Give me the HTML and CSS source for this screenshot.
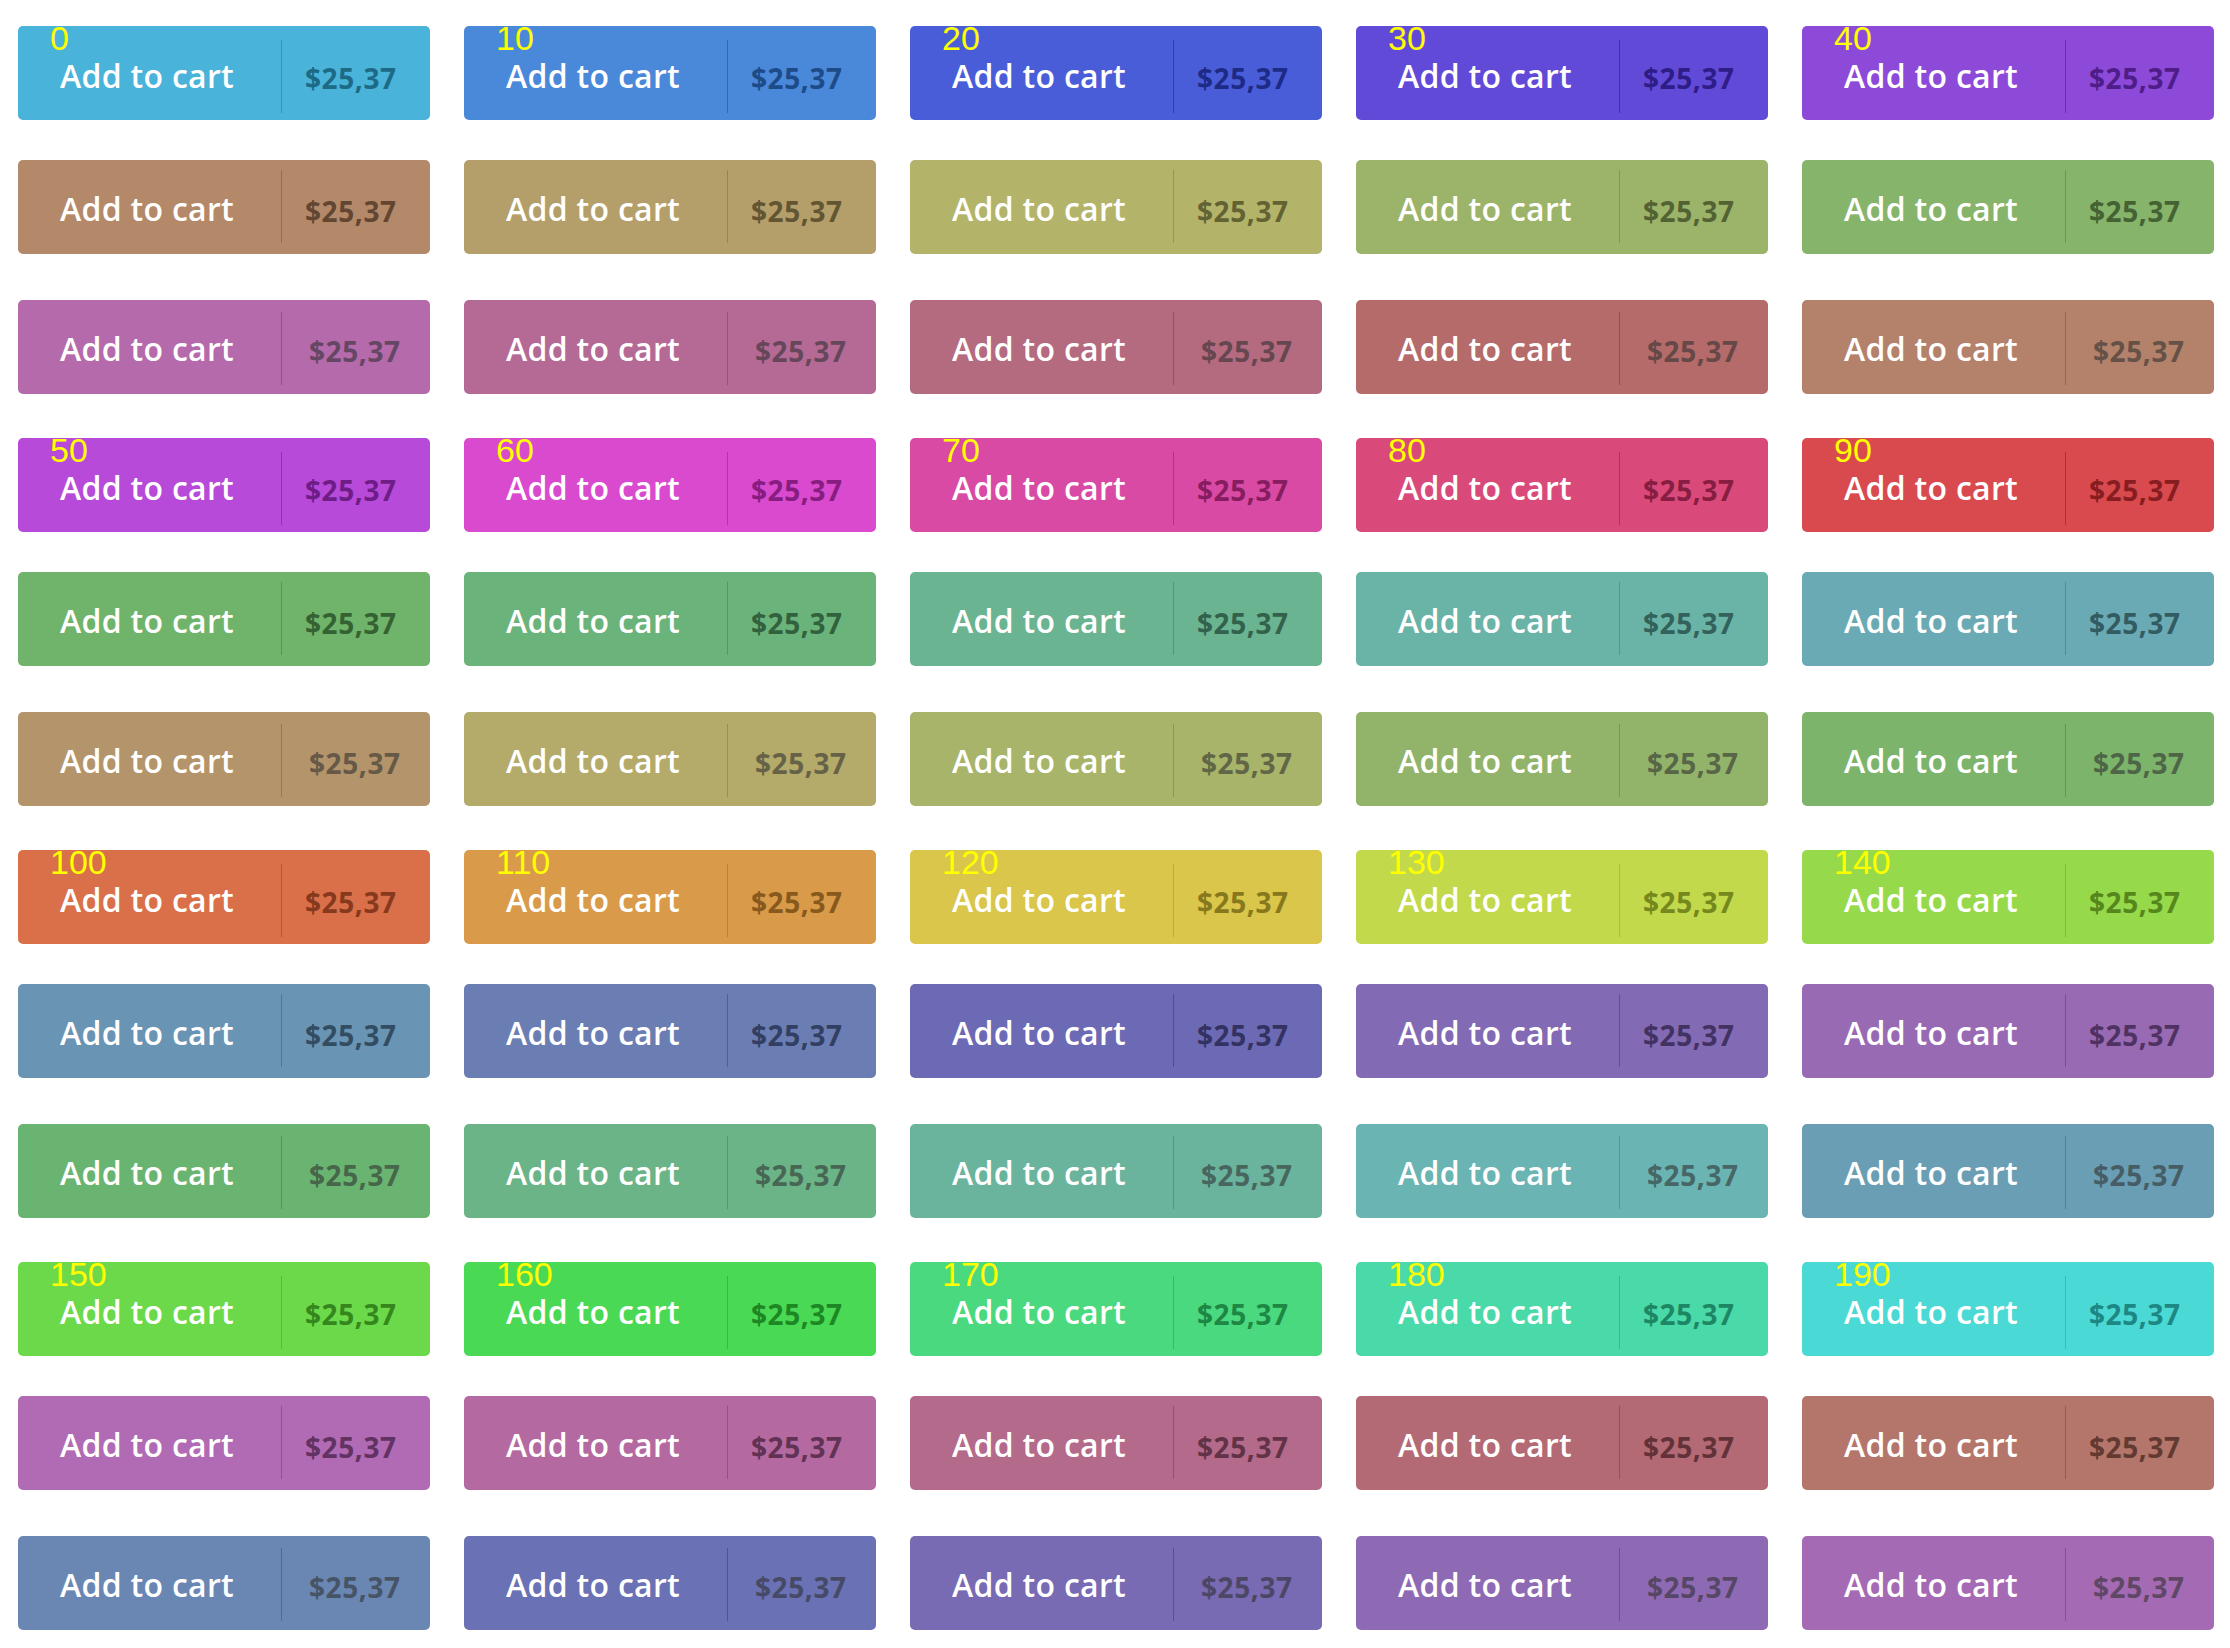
FILE: index.html
```html
<!DOCTYPE html>
<html lang="en">
<head>
<meta charset="utf-8">
<title>Add to cart buttons</title>
<link rel="stylesheet" href="styles.css">
</head>
<body>
<main class="page">
  <section class="row row-a">
    <button class="btn h196"><span class="tag">0</span><span class="txt">Add to cart</span><span class="price">$25,37</span></button>
    <button class="btn h214"><span class="tag">10</span><span class="txt">Add to cart</span><span class="price">$25,37</span></button>
    <button class="btn h232"><span class="tag">20</span><span class="txt">Add to cart</span><span class="price">$25,37</span></button>
    <button class="btn h250"><span class="tag">30</span><span class="txt">Add to cart</span><span class="price">$25,37</span></button>
    <button class="btn h268"><span class="tag">40</span><span class="txt">Add to cart</span><span class="price">$25,37</span></button>
  </section>
  <section class="row row-b">
    <button class="btn h25"><span class="txt">Add to cart</span><span class="price">$25,37</span></button>
    <button class="btn h43"><span class="txt">Add to cart</span><span class="price">$25,37</span></button>
    <button class="btn h61"><span class="txt">Add to cart</span><span class="price">$25,37</span></button>
    <button class="btn h79"><span class="txt">Add to cart</span><span class="price">$25,37</span></button>
    <button class="btn h97"><span class="txt">Add to cart</span><span class="price">$25,37</span></button>
  </section>
  <section class="row row-c">
    <button class="btn h307"><span class="txt">Add to cart</span><span class="price">$25,37</span></button>
    <button class="btn h325"><span class="txt">Add to cart</span><span class="price">$25,37</span></button>
    <button class="btn h343"><span class="txt">Add to cart</span><span class="price">$25,37</span></button>
    <button class="btn h1"><span class="txt">Add to cart</span><span class="price">$25,37</span></button>
    <button class="btn h19"><span class="txt">Add to cart</span><span class="price">$25,37</span></button>
  </section>

  <section class="row row-a">
    <button class="btn h286"><span class="tag">50</span><span class="txt">Add to cart</span><span class="price">$25,37</span></button>
    <button class="btn h304"><span class="tag">60</span><span class="txt">Add to cart</span><span class="price">$25,37</span></button>
    <button class="btn h322"><span class="tag">70</span><span class="txt">Add to cart</span><span class="price">$25,37</span></button>
    <button class="btn h340"><span class="tag">80</span><span class="txt">Add to cart</span><span class="price">$25,37</span></button>
    <button class="btn h358"><span class="tag">90</span><span class="txt">Add to cart</span><span class="price">$25,37</span></button>
  </section>
  <section class="row row-b">
    <button class="btn h116"><span class="txt">Add to cart</span><span class="price">$25,37</span></button>
    <button class="btn h134"><span class="txt">Add to cart</span><span class="price">$25,37</span></button>
    <button class="btn h152"><span class="txt">Add to cart</span><span class="price">$25,37</span></button>
    <button class="btn h170"><span class="txt">Add to cart</span><span class="price">$25,37</span></button>
    <button class="btn h188"><span class="txt">Add to cart</span><span class="price">$25,37</span></button>
  </section>
  <section class="row row-c">
    <button class="btn h34"><span class="txt">Add to cart</span><span class="price">$25,37</span></button>
    <button class="btn h52"><span class="txt">Add to cart</span><span class="price">$25,37</span></button>
    <button class="btn h70"><span class="txt">Add to cart</span><span class="price">$25,37</span></button>
    <button class="btn h88"><span class="txt">Add to cart</span><span class="price">$25,37</span></button>
    <button class="btn h106"><span class="txt">Add to cart</span><span class="price">$25,37</span></button>
  </section>

  <section class="row row-a">
    <button class="btn h16"><span class="tag">100</span><span class="txt">Add to cart</span><span class="price">$25,37</span></button>
    <button class="btn h34"><span class="tag">110</span><span class="txt">Add to cart</span><span class="price">$25,37</span></button>
    <button class="btn h52"><span class="tag">120</span><span class="txt">Add to cart</span><span class="price">$25,37</span></button>
    <button class="btn h70"><span class="tag">130</span><span class="txt">Add to cart</span><span class="price">$25,37</span></button>
    <button class="btn h88"><span class="tag">140</span><span class="txt">Add to cart</span><span class="price">$25,37</span></button>
  </section>
  <section class="row row-b">
    <button class="btn h206"><span class="txt">Add to cart</span><span class="price">$25,37</span></button>
    <button class="btn h224"><span class="txt">Add to cart</span><span class="price">$25,37</span></button>
    <button class="btn h242"><span class="txt">Add to cart</span><span class="price">$25,37</span></button>
    <button class="btn h260"><span class="txt">Add to cart</span><span class="price">$25,37</span></button>
    <button class="btn h278"><span class="txt">Add to cart</span><span class="price">$25,37</span></button>
  </section>
  <section class="row row-c">
    <button class="btn h126"><span class="txt">Add to cart</span><span class="price">$25,37</span></button>
    <button class="btn h144"><span class="txt">Add to cart</span><span class="price">$25,37</span></button>
    <button class="btn h162"><span class="txt">Add to cart</span><span class="price">$25,37</span></button>
    <button class="btn h180"><span class="txt">Add to cart</span><span class="price">$25,37</span></button>
    <button class="btn h198"><span class="txt">Add to cart</span><span class="price">$25,37</span></button>
  </section>

  <section class="row row-a">
    <button class="btn h106"><span class="tag">150</span><span class="txt">Add to cart</span><span class="price">$25,37</span></button>
    <button class="btn h124"><span class="tag">160</span><span class="txt">Add to cart</span><span class="price">$25,37</span></button>
    <button class="btn h142"><span class="tag">170</span><span class="txt">Add to cart</span><span class="price">$25,37</span></button>
    <button class="btn h160"><span class="tag">180</span><span class="txt">Add to cart</span><span class="price">$25,37</span></button>
    <button class="btn h178"><span class="tag">190</span><span class="txt">Add to cart</span><span class="price">$25,37</span></button>
  </section>
  <section class="row row-b">
    <button class="btn h298"><span class="txt">Add to cart</span><span class="price">$25,37</span></button>
    <button class="btn h316"><span class="txt">Add to cart</span><span class="price">$25,37</span></button>
    <button class="btn h334"><span class="txt">Add to cart</span><span class="price">$25,37</span></button>
    <button class="btn h352"><span class="txt">Add to cart</span><span class="price">$25,37</span></button>
    <button class="btn h10"><span class="txt">Add to cart</span><span class="price">$25,37</span></button>
  </section>
  <section class="row row-c">
    <button class="btn h216"><span class="txt">Add to cart</span><span class="price">$25,37</span></button>
    <button class="btn h234"><span class="txt">Add to cart</span><span class="price">$25,37</span></button>
    <button class="btn h252"><span class="txt">Add to cart</span><span class="price">$25,37</span></button>
    <button class="btn h270"><span class="txt">Add to cart</span><span class="price">$25,37</span></button>
    <button class="btn h288"><span class="txt">Add to cart</span><span class="price">$25,37</span></button>
  </section>
</main>
</body>
</html>
```
FILE: styles.css
```css
* { box-sizing: border-box; }

html, body {
  margin: 0;
  padding: 0;
  background: #ffffff;
}

.page {
  padding: 26px 16px 0 18px;
  display: flex;
  flex-direction: column;
}

.row {
  display: grid;
  grid-template-columns: repeat(5, 412px);
  column-gap: 34px;
}

.row-a { margin-bottom: 40px; --s: 65%; --l: 57%; --pl: 32%; --ps: 65%; }
.row-b { margin-bottom: 46px; --s: 33%; --l: 56%; --pl: 29%; --ps: 33%; }
.row-c { margin-bottom: 44px; --s: 33%; --l: 56%; --pl: 34%; --ps: 18%; }

.btn {
  position: relative;
  display: flex;
  align-items: flex-start;
  height: 94px;
  margin: 0;
  padding: 0;
  border: 0;
  border-radius: 5px;
  background: hsl(var(--h) var(--s) var(--l));
  color: #ffffff;
  text-align: left;
  cursor: pointer;
}

.tag {
  position: absolute;
  top: -7px;
  left: 32px;
  font-family: "Liberation Sans", Arial, sans-serif;
  font-size: 34px;
  line-height: normal;
  color: #ffff00;
}

.txt {
  width: 263px;
  padding: 33px 0 0 42px;
  font-family: "Open Sans", "DejaVu Sans", sans-serif;
  font-size: 32px;
  font-weight: 600;
  letter-spacing: 0.3px;
  line-height: 32px;
  color: #ffffff;
  white-space: nowrap;
}

.price {
  height: 73px;
  margin-top: 10px;
  padding: 27px 0 0 23px;
  border-left: 1px solid hsl(var(--h) var(--s) calc(var(--l) - 11%));
  font-family: "Open Sans", "DejaVu Sans", sans-serif;
  font-size: 28px;
  font-weight: 700;
  letter-spacing: 0.6px;
  line-height: 28px;
  color: hsl(var(--h) var(--ps) var(--pl));
  white-space: nowrap;
}

.row-a .txt { padding-top: 34px; }
.row-a .price { margin-top: 14px; padding-top: 24px; }
.row-c .price { margin-top: 12px; padding-top: 25px; padding-left: 27px; }

.h1 { --h: 1; }
.h10 { --h: 10; }
.h16 { --h: 16; }
.h19 { --h: 19; }
.h25 { --h: 25; }
.h34 { --h: 34; }
.h43 { --h: 43; }
.h52 { --h: 52; }
.h61 { --h: 61; }
.h70 { --h: 70; }
.h79 { --h: 79; }
.h88 { --h: 88; }
.h97 { --h: 97; }
.h106 { --h: 106; }
.h116 { --h: 116; }
.h124 { --h: 124; }
.h126 { --h: 126; }
.h134 { --h: 134; }
.h142 { --h: 142; }
.h144 { --h: 144; }
.h152 { --h: 152; }
.h160 { --h: 160; }
.h162 { --h: 162; }
.h170 { --h: 170; }
.h178 { --h: 178; }
.h180 { --h: 180; }
.h188 { --h: 188; }
.h196 { --h: 196; }
.h198 { --h: 198; }
.h206 { --h: 206; }
.h214 { --h: 214; }
.h216 { --h: 216; }
.h224 { --h: 224; }
.h232 { --h: 232; }
.h234 { --h: 234; }
.h242 { --h: 242; }
.h250 { --h: 250; }
.h252 { --h: 252; }
.h260 { --h: 260; }
.h268 { --h: 268; }
.h270 { --h: 270; }
.h278 { --h: 278; }
.h286 { --h: 286; }
.h288 { --h: 288; }
.h298 { --h: 298; }
.h304 { --h: 304; }
.h307 { --h: 307; }
.h316 { --h: 316; }
.h322 { --h: 322; }
.h325 { --h: 325; }
.h334 { --h: 334; }
.h340 { --h: 340; }
.h343 { --h: 343; }
.h352 { --h: 352; }
.h358 { --h: 358; }
```
